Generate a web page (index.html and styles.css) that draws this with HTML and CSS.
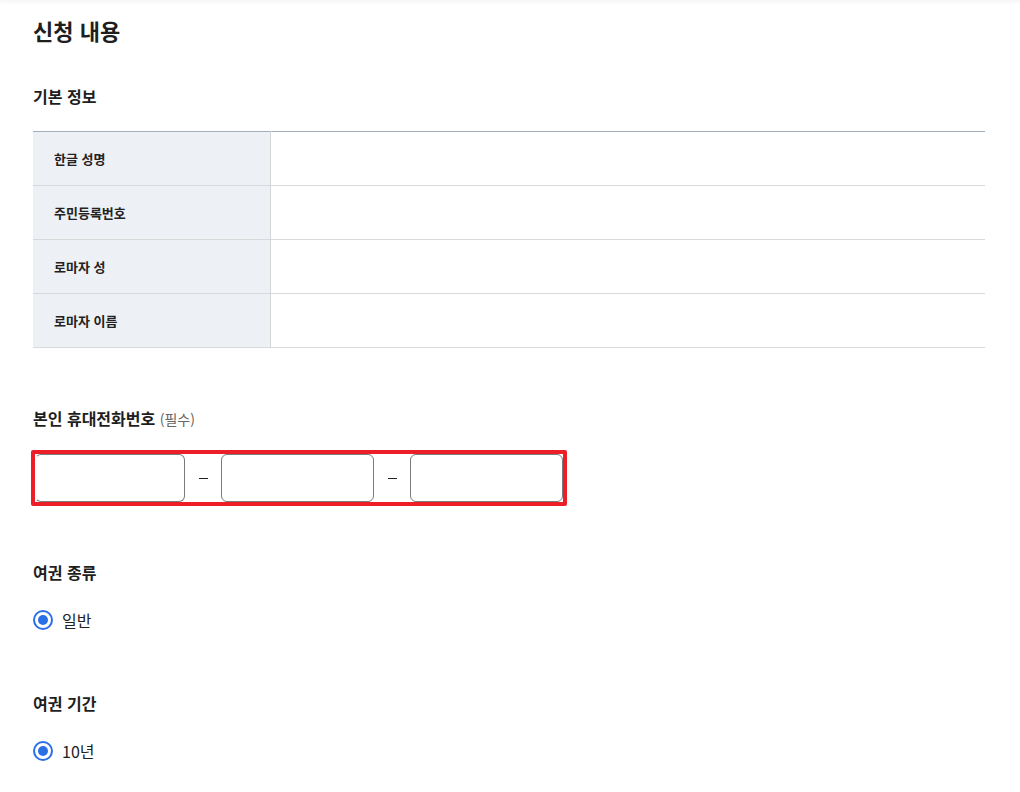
FILE: index.html
```html
<!DOCTYPE html>
<html lang="ko">

<head>
  <meta charset="UTF-8">
  <meta name="viewport" content="width=device-width, initial-scale=1.0">
  <title>신청 내용</title>
  <link rel="stylesheet" href="styles.css">
</head>

<body>
  <div class="topbar"></div>
  <main class="apply">
    <h1 class="apply-title">신청 내용</h1>

    <section class="block">
      <h2 class="block-title">기본 정보</h2>
      <table class="info">
        <tr>
          <th>한글 성명</th>
          <td></td>
        </tr>
        <tr>
          <th>주민등록번호</th>
          <td></td>
        </tr>
        <tr>
          <th>로마자 성</th>
          <td></td>
        </tr>
        <tr>
          <th>로마자 이름</th>
          <td></td>
        </tr>
      </table>
    </section>

    <section class="block phone-block">
      <h2 class="block-title">본인 휴대전화번호 <span class="req">(필수)</span></h2>
      <div class="phone">
        <input class="phone-input first" type="text" aria-label="휴대전화 앞자리">
        <span class="dash"></span>
        <input class="phone-input" type="text" aria-label="휴대전화 가운데자리">
        <span class="dash"></span>
        <input class="phone-input" type="text" aria-label="휴대전화 뒷자리">
      </div>
    </section>

    <section class="block choice-block">
      <h2 class="block-title">여권 종류</h2>
      <label class="radio">
        <span class="radio-mark"></span>
        <span>일반</span>
      </label>
    </section>

    <section class="block choice-block period">
      <h2 class="block-title">여권 기간</h2>
      <label class="radio">
        <span class="radio-mark"></span>
        <span>10년</span>
      </label>
    </section>
  </main>
</body>

</html>
```

FILE: styles.css
```css
body {
  margin: 0;
  padding: 0;
  background: #fff;
  color: #1e1e1e;
  font-family: "Noto Sans CJK KR", "Noto Sans", sans-serif;
}

.topbar {
  height: 0;
  box-shadow: 0 0 4px 1px rgba(0, 0, 0, 0.1);
}

.apply {
  padding: 15px 35px 0 33px;
}

.apply-title {
  margin: 0;
  font-size: 22px;
  line-height: 30px;
  font-weight: 700;
}

.block-title {
  margin: 0;
  font-size: 16px;
  line-height: 24px;
  font-weight: 700;
}

.block {
  margin-top: 39px;
}

.block .block-title {
  margin-bottom: 23px;
}

/* 기본 정보 표 */
.info {
  width: 100%;
  border-collapse: collapse;
  border-top: 1px solid #a2b0be;
}

.info tr {
  height: 54px;
  border-bottom: 1px solid #d9d9d9;
}

.info th {
  width: 216px;
  padding: 0 0 0 21px;
  background: #edf0f4;
  border-right: 1px solid #d6d6d6;
  text-align: left;
  font-size: 13px;
  font-weight: 700;
  color: #222;
}

.info td {
  padding: 0;
}

.phone-block {
  margin-top: 58px;
}

.phone-block .block-title {
  margin-bottom: 19px;
}

.req {
  font-size: 14px;
  font-weight: 400;
  color: #666;
}

/* 휴대전화 입력 */
.phone {
  display: grid;
  grid-template-columns: 150px 36px 153px 36px 153px;
  align-items: center;
  width: 528px;
  margin-left: -2px;
  border: 4px solid #ec1f29;
  border-radius: 2px;
}

.phone-input {
  box-sizing: border-box;
  width: 100%;
  height: 48px;
  margin: 0;
  padding: 0 12px;
  border: 1px solid #7a7a7a;
  border-radius: 6px;
  background: #fff;
  font: inherit;
}

.phone-input.first {
  border-left-color: transparent;
}

.dash {
  justify-self: center;
  width: 9px;
  height: 1px;
  background: #222;
}

.choice-block {
  margin-top: 54px;
}

.choice-block.period {
  margin-top: 61px;
}

.choice-block .block-title {
  margin-bottom: 26px;
}

/* 라디오 */
.radio {
  display: flex;
  align-items: center;
  gap: 9px;
  font-size: 16px;
  line-height: 20px;
  color: #222;
}

.radio-mark {
  box-sizing: border-box;
  width: 20px;
  height: 20px;
  border: 2px solid #2b6fe6;
  border-radius: 50%;
  display: flex;
  align-items: center;
  justify-content: center;
}

.radio-mark::after {
  content: "";
  width: 10px;
  height: 10px;
  border-radius: 50%;
  background: #2b6fe6;
}
```
